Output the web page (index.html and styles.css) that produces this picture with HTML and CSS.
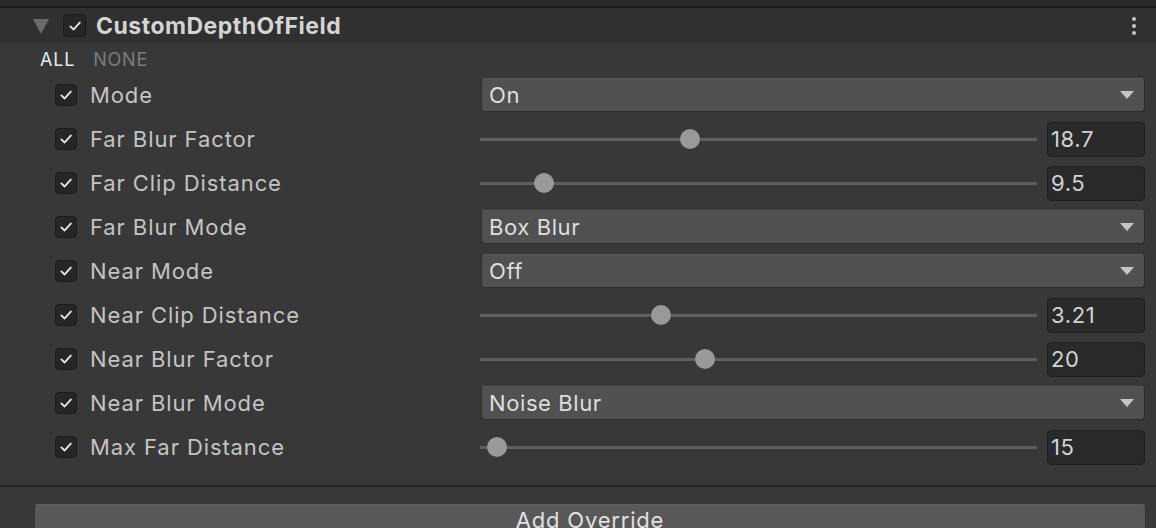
FILE: index.html
```html
<!DOCTYPE html>
<html>
<head>
<meta charset="utf-8">
<link rel="stylesheet" href="styles.css">
</head>
<body>
<div class="topbar"></div>
<div class="header">
  <span class="foldout"></span>
  <span class="check big"><svg viewBox="0 0 12 12"><path d="M2.5 6.3 L5 8.6 L9.6 3.4" /></svg></span>
  <span class="title">CustomDepthOfField</span>
  <span class="kebab"><i></i><i></i><i></i></span>
</div>
<div class="allnone"><span class="all">ALL</span><span class="none">NONE</span></div>
<div class="rows">
  <div class="row">
    <span class="check"><svg viewBox="0 0 12 12"><path d="M2.5 6.3 L5 8.6 L9.6 3.4" /></svg></span>
    <span class="label">Mode</span>
    <div class="dropdown"><span>On</span><span class="arrow"></span></div>
  </div>
  <div class="row">
    <span class="check"><svg viewBox="0 0 12 12"><path d="M2.5 6.3 L5 8.6 L9.6 3.4" /></svg></span>
    <span class="label">Far Blur Factor</span>
    <div class="slider"><div class="track"><span class="thumb" style="left:210px"></span></div></div>
    <div class="num">18.7</div>
  </div>
  <div class="row">
    <span class="check"><svg viewBox="0 0 12 12"><path d="M2.5 6.3 L5 8.6 L9.6 3.4" /></svg></span>
    <span class="label">Far Clip Distance</span>
    <div class="slider"><div class="track"><span class="thumb" style="left:64px"></span></div></div>
    <div class="num">9.5</div>
  </div>
  <div class="row">
    <span class="check"><svg viewBox="0 0 12 12"><path d="M2.5 6.3 L5 8.6 L9.6 3.4" /></svg></span>
    <span class="label">Far Blur Mode</span>
    <div class="dropdown"><span>Box Blur</span><span class="arrow"></span></div>
  </div>
  <div class="row">
    <span class="check"><svg viewBox="0 0 12 12"><path d="M2.5 6.3 L5 8.6 L9.6 3.4" /></svg></span>
    <span class="label">Near Mode</span>
    <div class="dropdown"><span>Off</span><span class="arrow"></span></div>
  </div>
  <div class="row">
    <span class="check"><svg viewBox="0 0 12 12"><path d="M2.5 6.3 L5 8.6 L9.6 3.4" /></svg></span>
    <span class="label">Near Clip Distance</span>
    <div class="slider"><div class="track"><span class="thumb" style="left:181px"></span></div></div>
    <div class="num">3.21</div>
  </div>
  <div class="row">
    <span class="check"><svg viewBox="0 0 12 12"><path d="M2.5 6.3 L5 8.6 L9.6 3.4" /></svg></span>
    <span class="label">Near Blur Factor</span>
    <div class="slider"><div class="track"><span class="thumb" style="left:225px"></span></div></div>
    <div class="num">20</div>
  </div>
  <div class="row">
    <span class="check"><svg viewBox="0 0 12 12"><path d="M2.5 6.3 L5 8.6 L9.6 3.4" /></svg></span>
    <span class="label">Near Blur Mode</span>
    <div class="dropdown"><span>Noise Blur</span><span class="arrow"></span></div>
  </div>
  <div class="row">
    <span class="check"><svg viewBox="0 0 12 12"><path d="M2.5 6.3 L5 8.6 L9.6 3.4" /></svg></span>
    <span class="label">Max Far Distance</span>
    <div class="slider"><div class="track"><span class="thumb" style="left:17px"></span></div></div>
    <div class="num">15</div>
  </div>
</div>
<div class="separator"></div>
<div class="footer"><div class="button">Add Override</div></div>
</body>
</html>
```
FILE: styles.css
```css
html, body {
  margin: 0;
  padding: 0;
  background: #383838;
  font-family: Inter, "Noto Sans", sans-serif;
  color: #c4c4c4;
  overflow: hidden;
  height: 528px;
}
.topbar {
  height: 6px;
  background: #2a2a2a;
  border-bottom: 2px solid #1c1c1c;
}
.header {
  height: 35px;
  background: #303030;
  display: flex;
  align-items: center;
  padding-left: 33px;
  padding-right: 20px;
}
.foldout {
  width: 0;
  height: 0;
  border-left: 8px solid transparent;
  border-right: 8px solid transparent;
  border-top: 15px solid #6a6a6a;
  margin-right: 14px;
  margin-top: 1px;
}
.check {
  width: 22px;
  height: 22px;
  box-sizing: border-box;
  background: #262626;
  border: 1px solid #1c1c1c;
  border-radius: 4px;
  display: flex;
  align-items: center;
  justify-content: center;
  flex: none;
}
.check svg {
  width: 16px;
  height: 16px;
  fill: none;
  stroke: #e4e4e4;
  stroke-width: 1.4;
  stroke-linecap: round;
  stroke-linejoin: round;
}
.check.big {
  width: 23px;
  height: 23px;
}
.title {
  margin-left: 10px;
  font-weight: 700;
  font-size: 23px;
  letter-spacing: 0.5px;
  color: #d4d4d4;
  flex: 1;
}
.kebab {
  display: flex;
  flex-direction: column;
  gap: 3px;
}
.kebab i {
  display: block;
  width: 4px;
  height: 4px;
  border-radius: 50%;
  background: #c8c8c8;
}
.allnone {
  height: 30px;
  display: flex;
  align-items: center;
  padding-left: 40px;
  gap: 18px;
  font-size: 18px;
  letter-spacing: 0.8px;
  padding-top: 3px;
  box-sizing: border-box;
}
.all { color: #e8e8e8; }
.none { color: #7c7c7c; }
.rows {
  display: flex;
  flex-direction: column;
}
.row {
  height: 44px;
  display: flex;
  align-items: center;
  padding-left: 55px;
  padding-right: 11px;
}
.label {
  margin-left: 13px;
  width: 390px;
  font-size: 22px;
  letter-spacing: 0.9px;
  color: #c4c4c4;
  flex: none;
}
.dropdown {
  flex: 1;
  height: 34px;
  box-sizing: border-box;
  background: #515151;
  border: 1px solid #2e2e2e;
  border-top-color: #5a5a5a;
  border-radius: 4px;
  display: flex;
  align-items: center;
  justify-content: space-between;
  padding-left: 7px;
  padding-right: 10px;
  font-size: 22px;
  letter-spacing: 0.6px;
  color: #dedede;
  margin-left: 1px;
}
.arrow {
  width: 0;
  height: 0;
  border-left: 7px solid transparent;
  border-right: 7px solid transparent;
  border-top: 8px solid #c4c4c4;
}
.slider {
  width: 557px;
  flex: none;
  height: 34px;
  display: flex;
  align-items: center;
}
.track {
  position: relative;
  width: 100%;
  height: 3px;
  background: #5e5e5e;
}
.thumb {
  position: absolute;
  top: 50%;
  width: 20px;
  height: 20px;
  margin-left: -10px;
  margin-top: -10px;
  border-radius: 50%;
  background: #999999;
}
.num {
  margin-left: 10px;
  flex: 1;
  height: 35px;
  box-sizing: border-box;
  background: #2a2a2a;
  border: 1px solid #1f1f1f;
  border-radius: 4px;
  display: flex;
  align-items: center;
  padding-left: 3px;
  font-size: 22px;
  letter-spacing: 0.6px;
  color: #d2d2d2;
}
.separator {
  margin-top: 16px;
  height: 2px;
  background: #232323;
}
.footer {
  padding: 17px 10px 0 34px;
}
.button {
  height: 34px;
  box-sizing: border-box;
  background: #585858;
  border: 1px solid #303030;
  border-top-color: #626262;
  border-radius: 4px;
  text-align: center;
  font-size: 22px;
  letter-spacing: 0.8px;
  line-height: 30px;
  color: #e0e0e0;
}
```
